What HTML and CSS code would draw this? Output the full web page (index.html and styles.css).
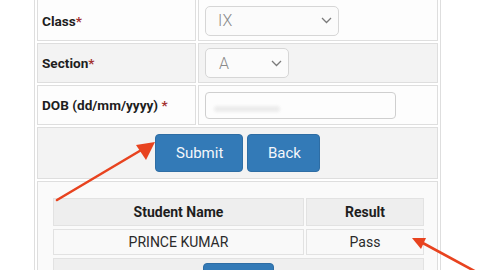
FILE: index.html
```html
<!DOCTYPE html>
<html>
<head>
<meta charset="utf-8">
<link rel="stylesheet" href="styles.css">
</head>
<body>
<table class="form">
  <tr class="row-white">
    <td class="label first">Class<span class="req">*</span></td>
    <td class="field first">
      <div class="select sel-class"><span class="val">IX</span>
        <svg class="chev" width="11" height="7" viewBox="0 0 11 7"><path d="M1 1 L5.5 5.5 L10 1" fill="none" stroke="#7a7a7a" stroke-width="1.3"/></svg>
      </div>
    </td>
  </tr>
  <tr class="row-grey">
    <td class="label">Section<span class="req">*</span></td>
    <td class="field">
      <div class="select sel-section"><span class="val">A</span>
        <svg class="chev" width="11" height="7" viewBox="0 0 11 7"><path d="M1 1 L5.5 5.5 L10 1" fill="none" stroke="#7a7a7a" stroke-width="1.3"/></svg>
      </div>
    </td>
  </tr>
  <tr class="row-white">
    <td class="label">DOB (dd/mm/yyyy) <span class="req">*</span></td>
    <td class="field">
      <div class="input"><span class="blur"></span></div>
    </td>
  </tr>
  <tr class="row-grey">
    <td colspan="2" class="actions">
      <div class="btns">
        <button class="btn btn-submit">Submit</button>
        <button class="btn btn-back">Back</button>
      </div>
    </td>
  </tr>
  <tr class="row-result">
    <td colspan="2" class="result-cell">
      <table class="result">
        <tr class="head">
          <th class="c-name">Student Name</th>
          <th class="c-res">Result</th>
        </tr>
        <tr class="body">
          <td>PRINCE KUMAR</td>
          <td>Pass</td>
        </tr>
        <tr class="foot">
          <td colspan="2"><button class="btn btn-print" aria-label="Print"></button></td>
        </tr>
      </table>
    </td>
  </tr>
</table>
<svg class="arrows" width="480" height="270" viewBox="0 0 480 270">
  <line x1="57" y1="200" x2="143" y2="149" stroke="#e8431f" stroke-width="2.6" stroke-linecap="round"/>
  <polygon points="155,142 136,145 146,160" fill="#e8431f"/>
  <line x1="480" y1="274" x2="421" y2="242" stroke="#e8431f" stroke-width="2.6" stroke-linecap="round"/>
  <polygon points="412,238 426,238 421,249" fill="#e8431f"/>
</svg>
</body>
</html>
```
FILE: styles.css
```css
html, body {
  margin: 0;
  padding: 0;
  background: #ffffff;
  overflow: hidden;
}
body {
  font-family: Roboto, "Liberation Sans", sans-serif;
  color: #222;
  position: relative;
  width: 480px;
  height: 270px;
}
.form {
  margin: -6px 0 0 34px;
  width: 407px;
  border: 1px solid #dedede;
  border-collapse: separate;
  border-spacing: 2px;
  table-layout: fixed;
}
.form > tbody > tr > td {
  border: 1px solid #dedede;
  padding: 0;
  box-sizing: border-box;
}
.row-white > td { background: #fdfdfd; }
.row-grey > td { background: #f3f3f3; }
.label {
  width: 159px;
  height: 40px;
  padding-left: 4px !important;
  font-size: 13.6px;
  font-weight: 700;
  color: #1e1e1e;
}
.label.first, .field.first { height: 44px; }
.label.first { padding-top: 3px !important; }
.req { color: #a3312f; }
.field {
  height: 40px;
  padding-left: 6px !important;
}
.field.first { padding-top: 3px !important; }
.select {
  box-sizing: border-box;
  height: 30px;
  border: 1px solid #d6d6d6;
  border-radius: 5px;
  background: #fbfbfb;
  display: flex;
  align-items: center;
  justify-content: space-between;
  padding: 0 6px 0 12px;
}
.sel-class { width: 134px; }
.sel-section { width: 84px; padding-left: 13px; }
.val {
  font-size: 16px;
  font-weight: 300;
  color: #8a8a8a;
}
.input {
  box-sizing: border-box;
  width: 191px;
  height: 27px;
  border: 1px solid #cfcfcf;
  border-radius: 4px;
  background: #fdfdfd;
  display: flex;
  align-items: center;
  padding-left: 8px;
  margin-top: 1px;
}
.blur {
  display: block;
  width: 66px;
  height: 6px;
  margin-top: 6px;
  border-radius: 3px;
  background: #ececec;
  filter: blur(1.5px);
}
.actions {
  height: 52px;
}
.btns {
  display: flex;
  justify-content: center;
  gap: 4px;
}
.btn {
  box-sizing: border-box;
  height: 38px;
  padding: 0 20px;
  border: 1px solid #2e6da4;
  border-radius: 4px;
  background: #337ab7;
  color: #f4f7fb;
  font-family: Roboto, "Liberation Sans", sans-serif;
  font-size: 15px;
}
.btn-submit { width: 88px; }
.btn-back { width: 73px; }
.row-result > td { background: #fafafa; }
.result-cell {
  padding: 13px 12px 0 13px !important;
}
.result {
  width: 373px;
  border-collapse: separate;
  border-spacing: 2px 3px;
  table-layout: fixed;
}
.result th, .result td {
  box-sizing: border-box;
  border: 1px solid #e2e2e2;
  text-align: center;
  font-size: 14px;
  padding: 0;
}
.result .head th {
  height: 28px;
  background: #eeeeee;
  font-weight: 700;
  color: #1e1e1e;
}
.c-name { width: 251px; }
.c-res { width: 118px; }
.result .body td {
  height: 26px;
  background: #f9f9f9;
  color: #2a2a2a;
}
.result .foot td {
  height: 48px;
  background: #efefef;
  padding-top: 4px;
  vertical-align: top;
}
.btn-print {
  width: 71px;
  padding: 0;
}
.arrows {
  position: absolute;
  left: 0;
  top: 0;
  pointer-events: none;
}
```
